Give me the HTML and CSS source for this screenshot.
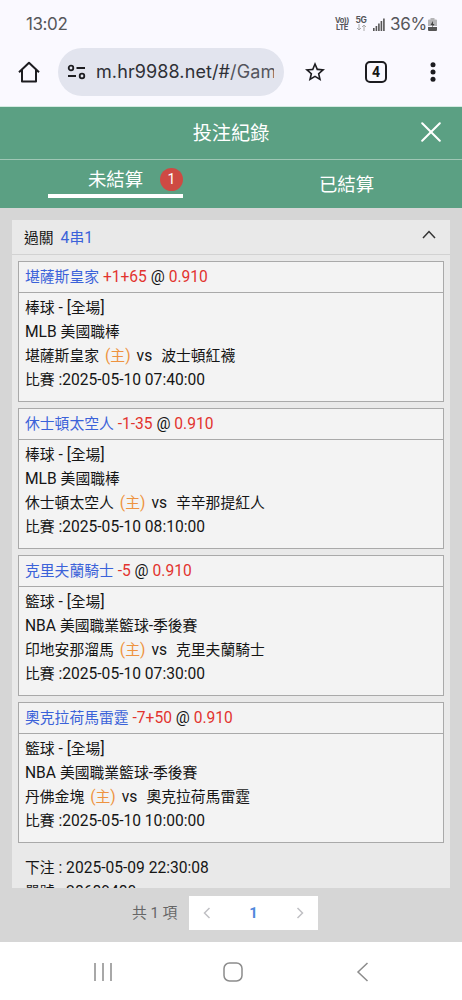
FILE: index.html
```
<!DOCTYPE html>
<html lang="zh-Hant">
<head>
    <meta charset="UTF-8">
    <meta name="viewport" content="width=device-width, initial-scale=1.0">
    <title>投注紀錄</title>
    <link rel="stylesheet" href="styles.css">
</head>
<body>
    <div class="status">
        <span class="clock">13:02</span>
        <div class="status-right">
            <div class="volte"><span>Vo))</span><span>LTE</span></div>
            <div class="net"><span>5G</span>
                <svg width="11" height="7" viewBox="0 0 11 7" fill="none" stroke="#aaa"><path d="M3 0v6M1 4l2 2 2-2M8 7V1M6 3l2-2 2 2"/></svg>
            </div>
            <svg class="signal" width="12" height="13" viewBox="0 0 12 13" fill="#555"><path d="M0 10h1.6v3H0zM2.6 8h1.6v5H2.6zM5.1 5.5h1.6V13H5.1zM7.6 3h1.6v10H7.6zM10.1 0.5h1.6V13h-1.6z"/></svg>
            <span class="percent">36%</span>
            <svg class="battery" width="9" height="13" viewBox="0 0 9 13"><path d="M2.5 0h4v1.5H8a1 1 0 0 1 1 1V8H0V2.500a1 1 0 0 1 1-1h1.500z" fill="#b5b5b7"/><path d="M0 9h9v3a1 1 0 0 1-1 1H1a1 1 0 0 1-1-1z" fill="#555"/><path d="M5 3L2.500 7h2L4 9.500 6.500 6H5z" fill="#444"/></svg>
        </div>
    </div>

    <div class="browser">
        <svg class="home" width="22" height="22" viewBox="0 0 22 22" fill="none" stroke="#1c1c20" stroke-width="2"><path d="M1 11.200L11 1.700 21 11.200M4 9v11.500h14V9" stroke-linejoin="round"/></svg>
        <div class="url">
            <svg width="19" height="16" viewBox="0 0 19 16" fill="none" stroke="#1c1c20" stroke-width="1.800"><circle cx="4" cy="4" r="2.300"/><path d="M9.500 4H18M1 12h8"/><circle cx="15" cy="12" r="2.300"/></svg>
            <span>m.hr9988.net/#<i>/Gam</i></span>
        </div>
        <svg class="star" width="24" height="24" viewBox="0 0 24 24" fill="#1c1c20"><path d="M22 9.240l-7.190-.62L12 2 9.190 8.630 2 9.240l5.460 4.730L5.820 21 12 17.270 18.180 21l-1.630-7.030zM12 15.400l-3.760 2.270 1-4.280-3.320-2.880 4.380-.38L12 6.100l1.710 4.040 4.380.38-3.320 2.880 1 4.280z"/></svg>
        <span class="tab-count">4</span>
        <svg class="dots" width="6" height="20" viewBox="0 0 6 20" fill="#1c1c20"><circle cx="3" cy="2.700" r="2.500"/><circle cx="3" cy="10" r="2.500"/><circle cx="3" cy="17.300" r="2.500"/></svg>
    </div>

    <header class="title-bar">
        <h1>投注紀錄</h1>
        <svg class="close" width="20" height="20" viewBox="0 0 20 20" fill="none" stroke="#fff" stroke-width="2" stroke-linecap="round"><path d="M1.200 1.200l17.600 17.600M18.800 1.200L1.200 18.800"/></svg>
    </header>
    <nav class="tabs">
        <div class="tab active"><div class="tab-inner">未結算<span class="badge">1</span></div></div>
        <div class="tab">已結算</div>
    </nav>

    <main>
        <section class="ticket">
            <div class="ticket-head">
                <span>過關</span>
                <span class="blue"><b>4</b>串<b>1</b></span>
                <svg width="14" height="9" viewBox="0 0 14 9" fill="none" stroke="#333" stroke-width="1.500"><path d="M1 8l6-6.500L13 8"/></svg>
            </div>
            <div class="match">
                <div class="pick"><span class="blue">堪薩斯皇家</span><b> <em>+1+65</em> @ <em>0.910</em></b></div>
                <div class="info">
                    <p>棒球<b> - [</b>全場<b>]</b></p>
                    <p><b>MLB </b>美國職棒</p>
                    <p>堪薩斯皇家<span class="host"><b>(</b>主<b>)</b></span><b class="vs">vs</b>波士頓紅襪</p>
                    <p>比賽<b> :2025-05-10 07:40:00</b></p>
                </div>
            </div>
            <div class="match">
                <div class="pick"><span class="blue">休士頓太空人</span><b> <em>-1-35</em> @ <em>0.910</em></b></div>
                <div class="info">
                    <p>棒球<b> - [</b>全場<b>]</b></p>
                    <p><b>MLB </b>美國職棒</p>
                    <p>休士頓太空人<span class="host"><b>(</b>主<b>)</b></span><b class="vs">vs</b>辛辛那提紅人</p>
                    <p>比賽<b> :2025-05-10 08:10:00</b></p>
                </div>
            </div>
            <div class="match">
                <div class="pick"><span class="blue">克里夫蘭騎士</span><b> <em>-5</em> @ <em>0.910</em></b></div>
                <div class="info">
                    <p>籃球<b> - [</b>全場<b>]</b></p>
                    <p><b>NBA </b>美國職業籃球<b>-</b>季後賽</p>
                    <p>印地安那溜馬<span class="host"><b>(</b>主<b>)</b></span><b class="vs">vs</b>克里夫蘭騎士</p>
                    <p>比賽<b> :2025-05-10 07:30:00</b></p>
                </div>
            </div>
            <div class="match">
                <div class="pick"><span class="blue">奧克拉荷馬雷霆</span><b> <em>-7+50</em> @ <em>0.910</em></b></div>
                <div class="info">
                    <p>籃球<b> - [</b>全場<b>]</b></p>
                    <p><b>NBA </b>美國職業籃球<b>-</b>季後賽</p>
                    <p>丹佛金塊<span class="host"><b>(</b>主<b>)</b></span><b class="vs">vs</b>奧克拉荷馬雷霆</p>
                    <p>比賽<b> :2025-05-10 10:00:00</b></p>
                </div>
            </div>
            <div class="summary">
                <p>下注<b> : 2025-05-09 22:30:08</b></p>
                <p>單號<b> : 28689480</b></p>
            </div>
        </section>
        <div class="pager">
            <span class="total">共 1 項</span>
            <div class="pages">
                <svg width="8" height="12" viewBox="0 0 8 12" fill="none" stroke="#c0c0c4" stroke-width="1.500"><path d="M6.500 1L1.500 6l5 5"/></svg>
                <span>1</span>
                <svg width="8" height="12" viewBox="0 0 8 12" fill="none" stroke="#c0c0c4" stroke-width="1.500"><path d="M1.500 1l5 5-5 5"/></svg>
            </div>
        </div>
    </main>

    <footer class="system-nav">
        <svg width="20" height="20" viewBox="0 0 20 20" fill="none" stroke="#8c8c8c" stroke-width="1.500"><path d="M2 1v18M10 1v18M18 1v18"/></svg>
        <svg width="20" height="20" viewBox="0 0 20 20" fill="none" stroke="#8c8c8c" stroke-width="1.500"><rect x="1" y="1" width="18" height="18" rx="5.500"/></svg>
        <svg width="20" height="20" viewBox="0 0 20 20" fill="none" stroke="#8c8c8c" stroke-width="1.500"><path d="M14.500 1L5 10l9.500 9"/></svg>
    </footer>
</body>
</html>
```
FILE: styles.css
```
* {
    box-sizing: border-box;
}
body {
    margin: 0;
    height: 1000px;
    display: flex;
    flex-direction: column;
    overflow: hidden;
    background-color: #fff;
    color: #151515;
    font-family: Roboto, "Noto Sans CJK TC", sans-serif;
    font-size: 14.8px;
}
svg {
    display: block;
    flex: none;
}
p {
    margin: 0;
}
/* latin text and digits run slightly larger than the chinese text */
b {
    font-size: 15.6px;
    font-weight: normal;
    white-space: pre;
}
em {
    font-style: normal;
    color: #e2332e;
}
.blue {
    color: #3b62d9;
}
.status {
    height: 48px;
    display: flex;
    justify-content: space-between;
    align-items: center;
    padding: 0 25px 0 26px;
    background-color: #faf9ff;
    color: #56565a;
    font-family: Inter, Roboto, sans-serif;
}
.clock {
    font-size: 17px;
    letter-spacing: -0.4px;
}
.status-right {
    display: flex;
    align-items: center;
}
.volte, .net {
    display: flex;
    flex-direction: column;
    align-items: center;
    font-size: 7.5px;
    line-height: 7px;
    font-weight: bold;
}
.volte {
    width: 14px;
    letter-spacing: -0.3px;
}
.net {
    width: 12px;
    margin-left: 6px;
    font-size: 8.5px;
    letter-spacing: -0.3px;
}
.signal {
    margin-left: 6px;
}
.percent {
    width: 36px;
    margin-left: 5px;
    font-size: 17px;
    letter-spacing: -0.3px;
}
.battery {
    margin-left: 2px;
}
.browser {
    height: 59px;
    display: flex;
    align-items: center;
    padding: 0 26px 11px 18px;
    background-color: #faf9ff;
    border-bottom: 1px solid #d5ebe2;
}
.url {
    width: 226px;
    height: 48px;
    display: flex;
    align-items: center;
    gap: 10px;
    margin-left: 18px;
    padding-left: 9px;
    border-radius: 24px;
    background-color: #e2e4ee;
    color: #2f3036;
    font-family: Inter, Roboto, sans-serif;
    font-size: 18px;
    letter-spacing: 0.1px;
}
.url span {
    width: 178px;
    overflow: hidden;
    white-space: nowrap;
}
.url i {
    font-style: normal;
    color: #54555c;
}
.star {
    margin-left: 19px;
}
.tab-count {
    width: 22px;
    height: 22px;
    margin-left: 38px;
    border: 2px solid #1c1c20;
    border-radius: 5px;
    text-align: center;
    font-size: 14px;
    line-height: 18px;
    font-weight: bold;
}
.dots {
    margin-left: auto;
}
.title-bar {
    height: 53px;
    display: flex;
    align-items: center;
    padding: 0 21px 3px 41px;
    background-color: #5ba083;
    border-bottom: 1px solid #9fc7b5;
    color: #fff;
}
.title-bar h1 {
    flex: 1;
    margin: 0;
    text-align: center;
    font-size: 19.2px;
    font-weight: normal;
}
.tabs {
    height: 48px;
    display: flex;
    background-color: #5ba083;
    color: #fff;
    font-size: 18.4px;
}
.tab {
    width: 50%;
    display: flex;
    justify-content: center;
    align-items: center;
    padding-bottom: 3px;
}
.tab.active {
    align-items: flex-start;
}
.tab-inner {
    position: relative;
    width: 135px;
    height: 38px;
    border-bottom: 4px solid #fff;
    text-align: center;
    line-height: 39px;
}
.badge {
    position: absolute;
    top: 8px;
    right: 0;
    width: 23px;
    height: 23px;
    border-radius: 50%;
    background-color: #ce4a43;
    font-size: 14px;
    line-height: 23px;
}
main {
    height: 734px;
    display: flex;
    flex-direction: column;
    padding-top: 12px;
    background-color: #d6d6d6;
}
.ticket {
    height: 668px;
    flex: none;
    margin: 0 12px;
    overflow: hidden;
    background-color: #e9e9e9;
}
.ticket-head {
    height: 35px;
    display: flex;
    align-items: center;
    gap: 7px;
    padding: 0 14px 2px 12px;
    border-bottom: 1px solid #d2d2d2;
}
.ticket-head svg {
    margin: -3px 0 0 auto;
}
.match {
    height: 141px;
    margin: 6px;
    border: 1px solid #a9a9a9;
    background-color: #f3f3f3;
}
.pick {
    height: 31px;
    padding-left: 6px;
    border-bottom: 1px solid #a9a9a9;
    line-height: 30px;
}
.info {
    padding: 3px 0 0 6px;
    line-height: 24px;
}
.info p, .summary p {
    height: 24px;
    white-space: nowrap;
}
.host {
    margin: 0 6px;
    color: #ee9340;
}
.vs {
    margin-right: 9px;
}
.summary {
    padding: 7px 13px;
    line-height: 24px;
}
.pager {
    display: flex;
    align-items: center;
    gap: 11px;
    margin-top: 8px;
    padding-left: 132px;
}
.total {
    width: 46px;
    margin-top: -3px;
    color: #666;
    white-space: nowrap;
}
.pages {
    width: 129px;
    height: 34px;
    display: flex;
    justify-content: space-between;
    align-items: center;
    padding: 0 14px;
    background-color: #fff;
    color: #5088dc;
    font-weight: bold;
}
.system-nav {
    height: 58px;
    display: flex;
    justify-content: center;
    align-items: center;
    gap: 110px;
    padding: 2px 0 0 3px;
    background-color: #fff;
}
```
